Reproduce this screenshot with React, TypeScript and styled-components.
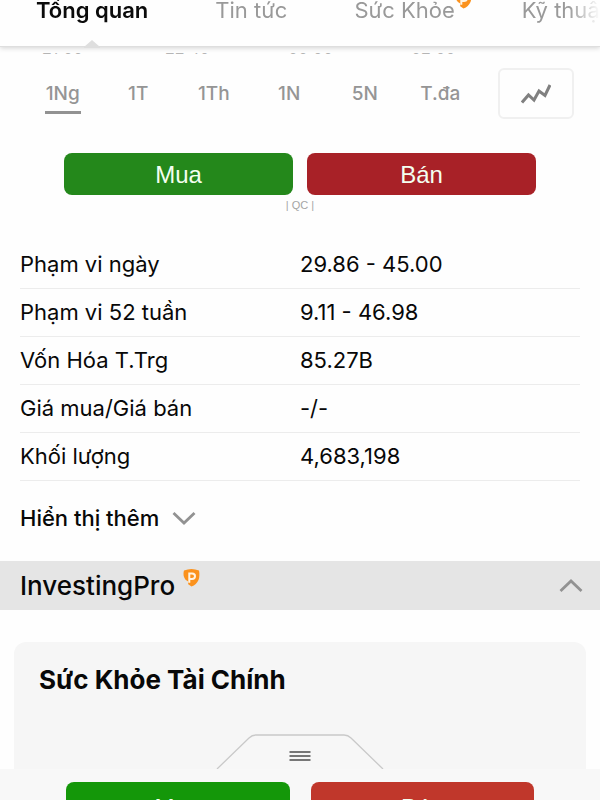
import React from "react";
import styled, { createGlobalStyle } from "styled-components";

const GlobalStyle = createGlobalStyle`
  *, *::before, *::after { box-sizing: border-box; }
  body { margin: 0; background: #fefefe; }
  button, a, table, h1, h2 { font: inherit; color: inherit; }
  button { border: 0; padding: 0; background: none; cursor: pointer; }
`;

const Page = styled.div`
  display: flex;
  flex-direction: column;
  height: 100vh;
  overflow: hidden;
  background: #fefefe;
  color: #080808;
  font-family: Inter, "Noto Sans", sans-serif;
  font-size: 22px;
  line-height: 26px;
`;

const Header = styled.header`
  position: relative;
  flex: none;
  height: 47px;
  border-bottom: 1px solid #dedede;
  box-shadow: 0 1px 5px rgba(0, 0, 0, 0.18);
`;

const Tabs = styled.nav`
  display: flex;
  align-items: flex-end;
  gap: 67px;
  height: 100%;
  padding: 0 0 23px 36px;
  overflow: hidden;
  white-space: nowrap;
  mask-image: linear-gradient(to right, #000 calc(100% - 32px), transparent);
`;

const Tab = styled.a<{ $active?: boolean }>`
  position: relative;
  flex: none;
  color: ${(p) => (p.$active ? "#0b0b0b" : "#999")};
  font-weight: ${(p) => (p.$active ? 600 : 400)};
  text-decoration: none;
`;

const TabBadge = styled.span`
  position: absolute;
  left: 100%;
  bottom: 14px;
  display: flex;
`;

const ActiveNotch = styled.svg`
  position: absolute;
  left: 84px;
  bottom: -2px;
`;

const Content = styled.main`
  flex: 1;
  min-height: 0;
  overflow: hidden;
`;

const AxisLabels = styled.div`
  display: flex;
  align-items: flex-end;
  gap: 83px;
  height: 2px;
  margin: 6px 42px 0;
  overflow: hidden;
  color: #b5b5b5;
  font-size: 16px;
  line-height: 14px;
`;

const AxisLabel = styled.span`
  flex: none;
  width: 40px;
`;

const Ranges = styled.div`
  display: flex;
  align-items: center;
  padding: 13px 26px 0 25px;
`;

const RangeCell = styled.div`
  flex: 1;
  display: flex;
  justify-content: center;
`;

const RangeButton = styled.button<{ $active?: boolean }>`
  padding: 4px 1px;
  border-top: 3px solid transparent;
  border-bottom: 3px solid ${(p) => (p.$active ? "#929292" : "transparent")};
  color: #959595;
  font-size: 19px;
  font-weight: 500;
`;

const ChartButton = styled.button`
  display: flex;
  align-items: center;
  justify-content: center;
  width: 76px;
  height: 51px;
  margin-left: 20px;
  border: 2px solid #f0f0f0;
  border-radius: 6px;
`;

const TradeRow = styled.div`
  display: flex;
  gap: 14px;
  padding: 34px 64px 0;
`;

const TradeButton = styled.button<{ $color: string; $tall?: boolean }>`
  flex: 1;
  height: ${(p) => (p.$tall ? 50 : 42)}px;
  padding-top: 1px;
  border-radius: 8px;
  background: ${(p) => p.$color};
  color: #f4fff0;
  font-family: "Liberation Sans", sans-serif;
  font-size: 24px;
`;

const AdNote = styled.p`
  margin: 0;
  padding-top: 2px;
  color: #a5a5a5;
  font-family: "Liberation Sans", sans-serif;
  font-size: 11px;
  line-height: 16px;
  text-align: center;
`;

const Stats = styled.table`
  width: calc(100% - 40px);
  margin: 27px 20px 0;
  border-collapse: collapse;
  table-layout: fixed;
`;

const StatRow = styled.tr`
  height: 48px;
  border-bottom: 1px solid #ececec;
`;

const StatName = styled.th`
  padding: 0;
  font-weight: 400;
  text-align: left;
`;

const StatValue = styled.td`
  padding: 0;
`;

const MoreButton = styled.button`
  display: flex;
  align-items: center;
  gap: 13px;
  margin: 24px 20px 30px;
  font-weight: 500;
`;

const SectionHeader = styled.button`
  display: flex;
  align-items: center;
  width: 100%;
  height: 49px;
  padding: 1px 17px 0 20px;
  background: #e5e5e5;
`;

const SectionTitle = styled.span`
  font-size: 26px;
  font-weight: 500;
`;

const SectionBadge = styled.span`
  display: flex;
  flex: 1;
  padding: 0 0 16px 8px;
`;

const Card = styled.section`
  min-height: 200px;
  margin: 32px 14px 0;
  padding: 22px 25px;
  border-radius: 12px;
  background: #f6f6f6;
`;

const CardTitle = styled.h2`
  margin: 0;
  font-size: 26px;
  font-weight: 700;
  line-height: 32px;
`;

const Footer = styled.footer`
  position: relative;
  flex: none;
  height: 31px;
  background: #f8f8f8;
`;

const FooterActions = styled.div`
  display: flex;
  gap: 21px;
  height: 100%;
  padding: 13px 66px 0;
  overflow: hidden;
`;

const DrawerHandle = styled.button`
  position: absolute;
  bottom: 100%;
  left: 50%;
  display: flex;
  transform: translateX(-50%);
`;

function ProBadge() {
  return (
    <svg width="17" height="19" viewBox="0 0 17 19" aria-hidden="true">
      <path d="M1 2.6Q8.5-.8 16 2.6Q17 8 15.5 12Q13.500 16.500 8.500 18.600L5.200 16.200V13.500Q1.700 12 .7 8Q.2 5 1 2.600Z" fill="#fb921d" />
      <path d="M6.300 14.700V5.500H9Q12 5.500 12 8.200T9 10.900H6.300" fill="none" stroke="#fff4e4" strokeWidth="2" />
    </svg>
  );
}

function Chevron({ up }: { up?: boolean }) {
  return (
    <svg width="24" height="14" viewBox="0 0 24 14" aria-hidden="true">
      <path d={up ? "M1.5 12L12 2L22.5 12" : "M1.5 2L12 12L22.5 2"} fill="none" stroke="#929292" strokeWidth="2.8" />
    </svg>
  );
}

const ranges = ["1Ng", "1T", "1Th", "1N", "5N", "T.đa"];

const stats = [
  ["Phạm vi ngày", "29.86 - 45.00"],
  ["Phạm vi 52 tuần", "9.11 - 46.98"],
  ["Vốn Hóa T.Trg", "85.27B"],
  ["Giá mua/Giá bán", "-/-"],
  ["Khối lượng", "4,683,198"],
];

export default function App() {
  return (
    <Page>
      <GlobalStyle />
      <Header>
        <Tabs>
          <Tab href="#overview" $active>Tổng quan</Tab>
          <Tab href="#news">Tin tức</Tab>
          <Tab href="#health">
            Sức Khỏe
            <TabBadge><ProBadge /></TabBadge>
          </Tab>
          <Tab href="#technical">Kỹ thuật</Tab>
        </Tabs>
        <ActiveNotch width="16" height="9" viewBox="0 0 16 9" aria-hidden="true">
          <path d="M0 8L8 1L16 8V9H0Z" fill="#dedede" />
        </ActiveNotch>
      </Header>

      <Content>
        <AxisLabels>
          {["21:00", "22:40", "00:00", "02:00"].map((t) => <AxisLabel key={t}>{t}</AxisLabel>)}
        </AxisLabels>
        <Ranges>
          {ranges.map((r, i) => (
            <RangeCell key={r}><RangeButton $active={i === 0}>{r}</RangeButton></RangeCell>
          ))}
          <ChartButton aria-label="Biểu đồ">
            <svg width="30" height="22" viewBox="0 0 30 22" aria-hidden="true">
              <path d="M1 19.500L7.500 12L13 17L18 8L24 12.500L29 2" fill="none" stroke="#808080" strokeWidth="3" />
            </svg>
          </ChartButton>
        </Ranges>

        <TradeRow>
          <TradeButton $color="#24881b">Mua</TradeButton>
          <TradeButton $color="#a82127">Bán</TradeButton>
        </TradeRow>
        <AdNote>| QC |</AdNote>

        <Stats>
          <tbody>
            {stats.map(([name, value]) => (
              <StatRow key={name}>
                <StatName scope="row">{name}</StatName>
                <StatValue>{value}</StatValue>
              </StatRow>
            ))}
          </tbody>
        </Stats>
        <MoreButton>Hiển thị thêm <Chevron /></MoreButton>

        <SectionHeader aria-expanded="true">
          <SectionTitle>InvestingPro</SectionTitle>
          <SectionBadge><ProBadge /></SectionBadge>
          <Chevron up />
        </SectionHeader>
        <Card>
          <CardTitle>Sức Khỏe Tài Chính</CardTitle>
        </Card>
      </Content>

      <Footer>
        <DrawerHandle aria-label="Mở bảng">
          <svg width="168" height="35" viewBox="0 0 168 35" aria-hidden="true">
            <path d="M1 35L33 4Q36 1 40 1H128Q132 1 135 4L167 35" fill="#f7f7f7" stroke="#c9c9c9" strokeWidth="1.3" />
            <path d="M73.500 18H94.500M73.500 22H94.500M73.500 26H94.500" stroke="#777" strokeWidth="1.8" />
          </svg>
        </DrawerHandle>
        <FooterActions>
          <TradeButton $color="#149709" $tall>Mua</TradeButton>
          <TradeButton $color="#c0372b" $tall>Bán</TradeButton>
        </FooterActions>
      </Footer>
    </Page>
  );
}
